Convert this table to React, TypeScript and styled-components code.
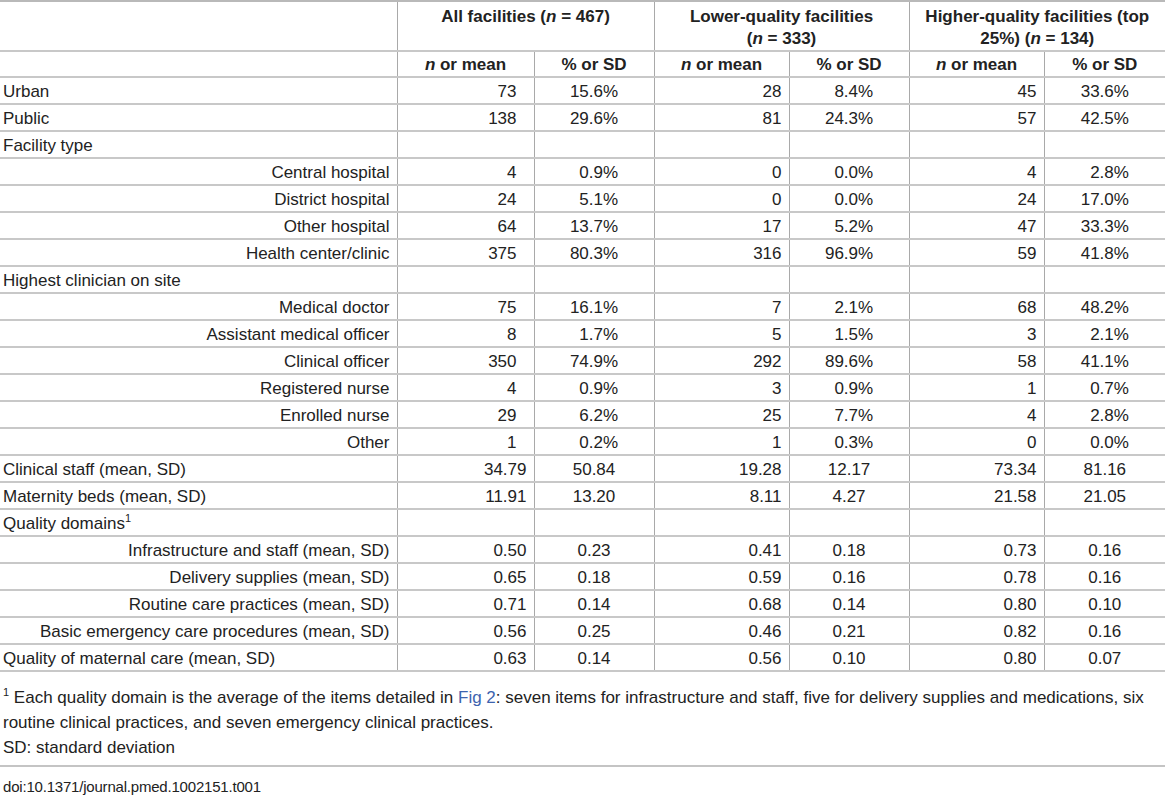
import React from 'react';
import styled, { createGlobalStyle } from 'styled-components';

const GlobalStyle = createGlobalStyle`
  html, body { margin: 0; padding: 0; background: #ffffff; }
  body {
    font-family: "Liberation Sans", Arial, Helvetica, sans-serif;
    font-size: 17px;
    color: #222222;
  }
`;

const Page = styled.div`
  width: 1165px;
`;

const Table = styled.table`
  width: 1165px;
  table-layout: fixed;
  border-collapse: collapse;
  border-top: 2px solid #b9b9b9;
`;

const HeadCell = styled.th<{ $top?: boolean }>`
  font-weight: bold;
  text-align: center;
  vertical-align: top;
  line-height: ${(p) => (p.$top ? 22 : 21)}px;
  padding: ${(p) => (p.$top ? '4px 5px 0' : '2px 5px 1px')};
  border-bottom: 2px solid #c8c8c8;
  border-left: 1px solid #a9a9a9;
  &:first-child { border-left: none; }
`;

const Cell = styled.td<{ $align: 'left' | 'right' | 'center'; $padRight?: number }>`
  text-align: ${(p) => p.$align};
  line-height: 21px;
  padding: 3px ${(p) => (p.$padRight !== undefined ? p.$padRight : 7)}px 1px
    ${(p) => (p.$align === 'left' ? 3 : 7)}px;
  border-bottom: 2px solid #c8c8c8;
  border-left: 1px solid #a9a9a9;
  white-space: nowrap;
  &:first-child { border-left: none; }
`;

const Sup = styled.sup`
  font-size: 11px;
  line-height: 0;
  vertical-align: super;
`;

const Notes = styled.div`
  padding-top: 13px;
  line-height: 25px;
`;

const Note = styled.p`
  margin: 0;
  padding-left: 3px;
`;

const Link = styled.a`
  color: #3c63ae;
  text-decoration: none;
`;

const Rule = styled.hr`
  border: 0;
  border-top: 2px solid #c4c4c4;
  margin: 5px 0 0;
`;

const Doi = styled.div`
  font-size: 15px;
  line-height: 25px;
  padding: 7px 3px 0;
  letter-spacing: -0.2px;
`;

type Row = {
  label: React.ReactNode;
  kind: 'cat' | 'sub' | 'group';
  v?: string[];
};

const rows: Row[] = [
  { label: 'Urban', kind: 'cat', v: ['73', '15.6%', '28', '8.4%', '45', '33.6%'] },
  { label: 'Public', kind: 'cat', v: ['138', '29.6%', '81', '24.3%', '57', '42.5%'] },
  { label: 'Facility type', kind: 'group' },
  { label: 'Central hospital', kind: 'sub', v: ['4', '0.9%', '0', '0.0%', '4', '2.8%'] },
  { label: 'District hospital', kind: 'sub', v: ['24', '5.1%', '0', '0.0%', '24', '17.0%'] },
  { label: 'Other hospital', kind: 'sub', v: ['64', '13.7%', '17', '5.2%', '47', '33.3%'] },
  { label: 'Health center/clinic', kind: 'sub', v: ['375', '80.3%', '316', '96.9%', '59', '41.8%'] },
  { label: 'Highest clinician on site', kind: 'group' },
  { label: 'Medical doctor', kind: 'sub', v: ['75', '16.1%', '7', '2.1%', '68', '48.2%'] },
  { label: 'Assistant medical officer', kind: 'sub', v: ['8', '1.7%', '5', '1.5%', '3', '2.1%'] },
  { label: 'Clinical officer', kind: 'sub', v: ['350', '74.9%', '292', '89.6%', '58', '41.1%'] },
  { label: 'Registered nurse', kind: 'sub', v: ['4', '0.9%', '3', '0.9%', '1', '0.7%'] },
  { label: 'Enrolled nurse', kind: 'sub', v: ['29', '6.2%', '25', '7.7%', '4', '2.8%'] },
  { label: 'Other', kind: 'sub', v: ['1', '0.2%', '1', '0.3%', '0', '0.0%'] },
  { label: 'Clinical staff (mean, SD)', kind: 'cat', v: ['34.79', '50.84', '19.28', '12.17', '73.34', '81.16'] },
  { label: 'Maternity beds (mean, SD)', kind: 'cat', v: ['11.91', '13.20', '8.11', '4.27', '21.58', '21.05'] },
  { label: <>Quality domains<Sup>1</Sup></>, kind: 'group' },
  { label: 'Infrastructure and staff (mean, SD)', kind: 'sub', v: ['0.50', '0.23', '0.41', '0.18', '0.73', '0.16'] },
  { label: 'Delivery supplies (mean, SD)', kind: 'sub', v: ['0.65', '0.18', '0.59', '0.16', '0.78', '0.16'] },
  { label: 'Routine care practices (mean, SD)', kind: 'sub', v: ['0.71', '0.14', '0.68', '0.14', '0.80', '0.10'] },
  { label: 'Basic emergency care procedures (mean, SD)', kind: 'sub', v: ['0.56', '0.25', '0.46', '0.21', '0.82', '0.16'] },
  { label: 'Quality of maternal care (mean, SD)', kind: 'cat', v: ['0.63', '0.14', '0.56', '0.10', '0.80', '0.07'] },
];

const widths = [397, 137, 120, 135, 120, 135, 121];

const FIG = '\u2007';

function padPct(s: string) {
  // single-digit percentages get a leading figure space so the % signs line up
  return /^\d\.\d%$/.test(s) ? FIG + s : s;
}

function nPad(col: number, s: string) {
  if (col === 0 && !s.includes('.')) return 17;
  return 7;
}

const NHead = () => (
  <>
    <i>n</i> or mean
  </>
);

export default function App() {
  return (
    <Page>
      <GlobalStyle />
      <Table>
        <colgroup>
          {widths.map((w, i) => (
            <col key={i} style={{ width: w }} />
          ))}
        </colgroup>
        <thead>
          <tr>
            <HeadCell $top />
            <HeadCell $top colSpan={2}>
              All facilities (<i>n</i> = 467)
            </HeadCell>
            <HeadCell $top colSpan={2}>
              Lower-quality facilities
              <br />(<i>n</i> = 333)
            </HeadCell>
            <HeadCell $top colSpan={2}>
              Higher-quality facilities (top
              <br />
              25%) (<i>n</i> = 134)
            </HeadCell>
          </tr>
          <tr>
            <HeadCell />
            <HeadCell><NHead /></HeadCell>
            <HeadCell>% or SD</HeadCell>
            <HeadCell><NHead /></HeadCell>
            <HeadCell>% or SD</HeadCell>
            <HeadCell><NHead /></HeadCell>
            <HeadCell>% or SD</HeadCell>
          </tr>
        </thead>
        <tbody>
          {rows.map((r, i) => (
            <tr key={i}>
              <Cell $align={r.kind === 'sub' ? 'right' : 'left'}>{r.label}</Cell>
              {r.v
                ? r.v.map((val, j) =>
                    j % 2 === 0 ? (
                      <Cell key={j} $align="right" $padRight={nPad(j, val)}>
                        {val}
                      </Cell>
                    ) : (
                      <Cell key={j} $align="center">
                        {padPct(val)}
                      </Cell>
                    )
                  )
                : [0, 1, 2, 3, 4, 5].map((j) => <Cell key={j} $align="center" />)}
            </tr>
          ))}
        </tbody>
      </Table>
      <Notes>
        <Note>
          <Sup>1</Sup> Each quality domain is the average of the items detailed in{' '}
          <Link href="#fig2">Fig 2</Link>: seven items for infrastructure and staff, five for
          delivery supplies and medications, six routine clinical practices, and seven emergency
          clinical practices.
        </Note>
        <Note>SD: standard deviation</Note>
      </Notes>
      <Rule />
      <Doi>doi:10.1371/journal.pmed.1002151.t001</Doi>
    </Page>
  );
}
